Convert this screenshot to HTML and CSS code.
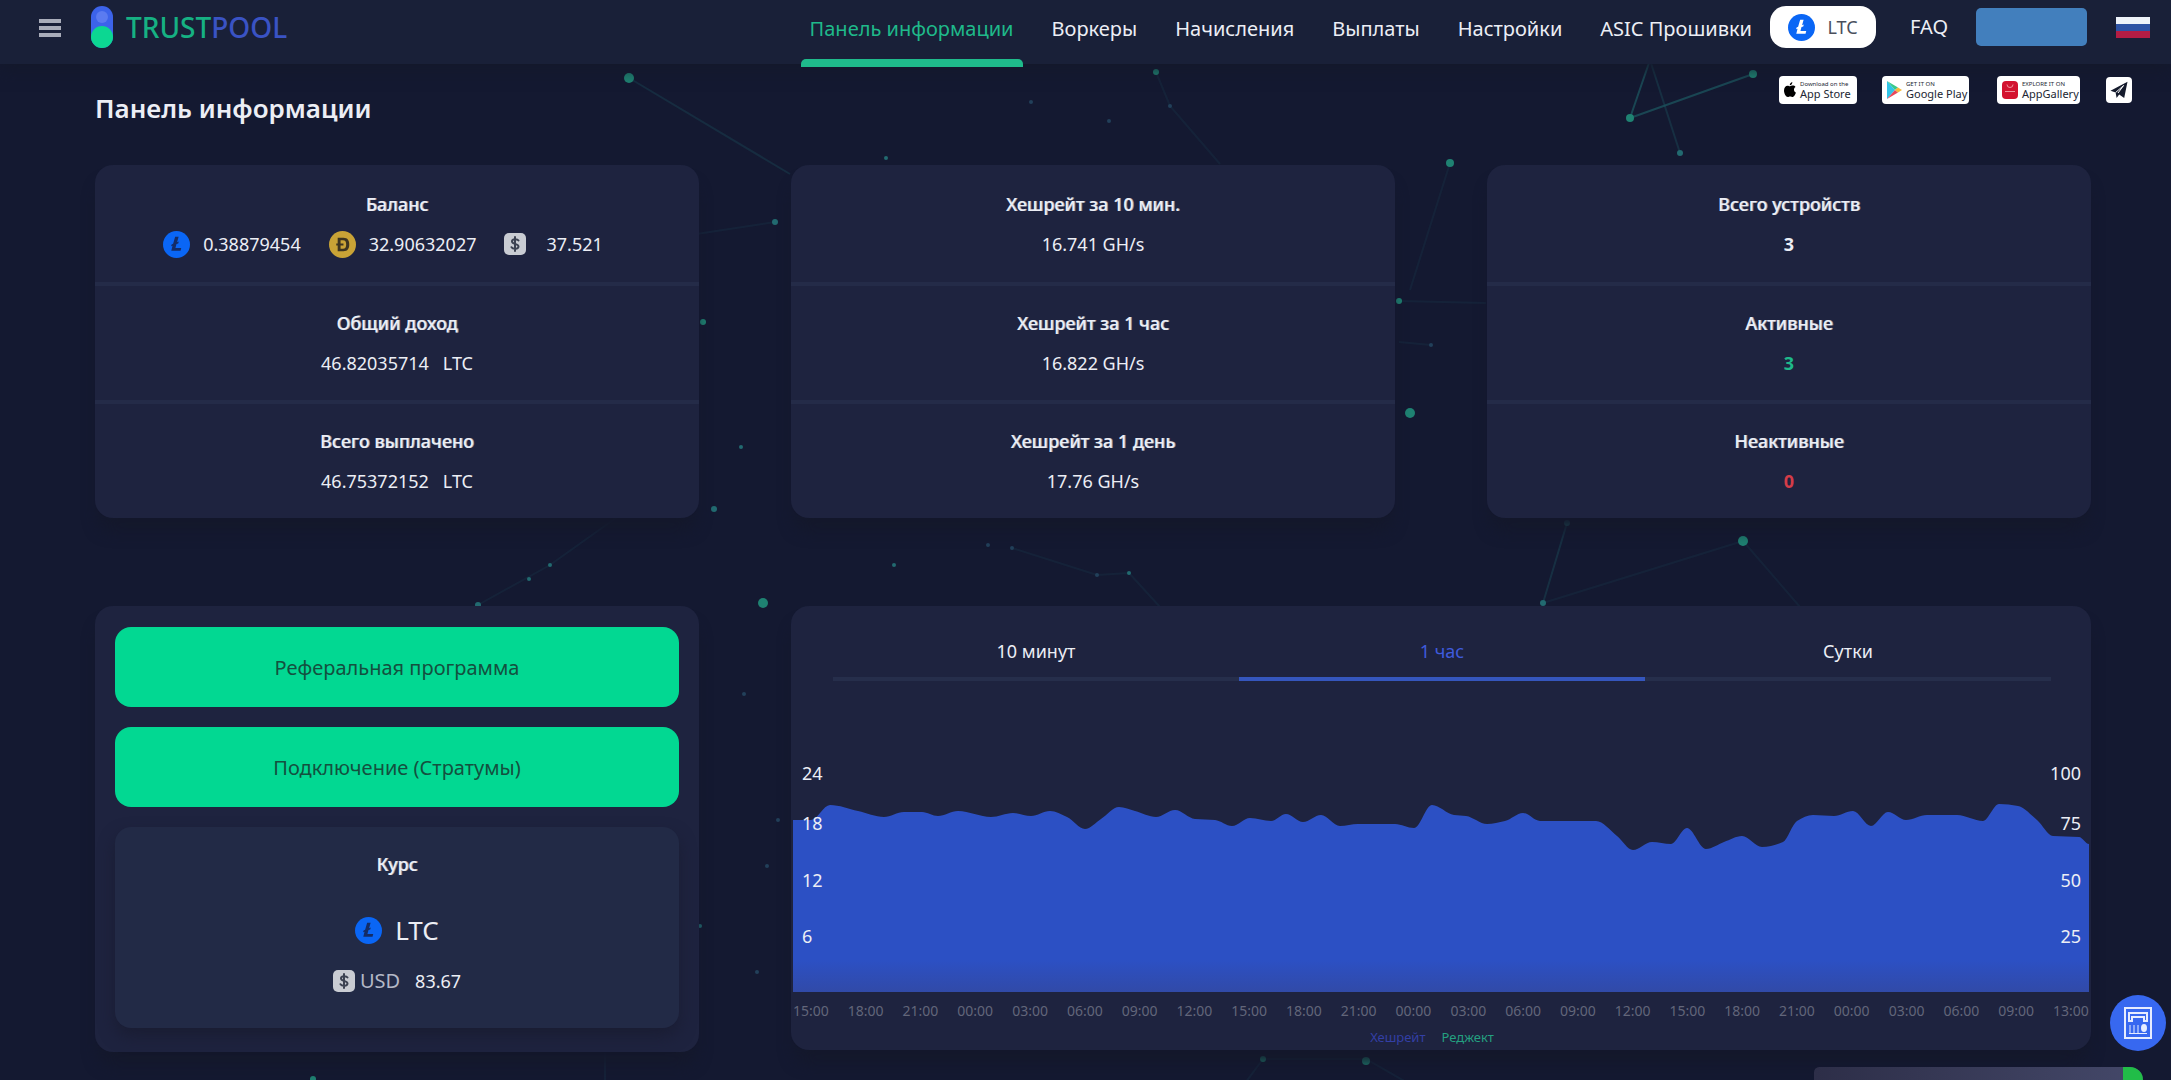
FILE: index.html
```html
<!DOCTYPE html>
<html lang="ru">
<head>
<meta charset="utf-8">
<meta name="viewport" content="width=device-width, initial-scale=1">
<title>TRUSTPOOL — Панель информации</title>
<link rel="stylesheet" href="styles.css">
</head>
<body>
<svg class="sprite" aria-hidden="true">
  <symbol id="ltc" viewBox="0 0 28 28"><circle cx="14" cy="14" r="14" fill="#0a66f5"/><path fill="currentColor" d="M12.6 6h3.6l-1.6 5.6 1.8-.7-.6 2-1.8.7-1.1 4h6l-.7 3H8.6l1.3-5.300-1.500.6.5-2 1.600-.6z"/></symbol>
  <symbol id="doge" viewBox="0 0 28 28"><circle cx="14" cy="14" r="14" fill="#c9a336"/><path fill="#3d3420" fill-rule="evenodd" d="M9 7h6c4.500 0 6 3 6 7s-1.500 7-6 7H9v-6H7.500v-2H9zm3 2.600V13h3v2h-3v3.400h2.500c2.400 0 3.300-1.600 3.300-4.400s-.9-4.400-3.300-4.400z"/></symbol>
  <symbol id="usd" viewBox="0 0 22 22"><rect width="22" height="22" rx="5" fill="#c9ccd3"/><path fill="none" stroke="#3c4252" stroke-width="2" stroke-linecap="round" d="M14.500 7.500C13.500 6 8 5.500 8 8.500c0 3 6.500 1.800 6.500 5 0 3-5.800 2.800-7 .7M11 4v14"/></symbol>
</svg>

<svg class="network" aria-hidden="true">
  <g fill="none" stroke="#1d5a63" stroke-width="2">
    <path opacity=".3" d="M629 78 790 174"/>
    <path opacity=".7" d="M1630 118 1753 74M1630 118 1650 60"/>
    <path opacity=".35" d="M1650 60 1680 153M1567 523 1543 603"/>
    <path opacity=".16" d="M1156 72 1170 106 1220 164M690 235 775 222M1450 163 1410 290M1399 301 1486 303M1399 342 1431 345M1129 573 1160 607M1012 548 1097 575 1129 573M1743 541 1543 603M1743 541 1800 607M478 605 550 565 620 515M1263 1059H1366L1420 1090M1263 1059 1240 1090M605 1053V1080"/>
  </g>
  <g fill="#1f8272">
    <circle cx="629" cy="78" r="5"/><circle cx="1156" cy="72" r="3"/><circle cx="1399" cy="301" r="3"/><circle cx="1450" cy="163" r="4"/>
    <circle cx="1630" cy="118" r="4"/><circle cx="1753" cy="74" r="4"/><circle cx="1410" cy="413" r="5"/><circle cx="763" cy="603" r="5"/>
    <circle cx="1743" cy="541" r="5"/><circle cx="1263" cy="1059" r="3"/><circle cx="1366" cy="1061" r="4"/><circle cx="703" cy="322" r="3"/>
    <circle cx="313" cy="1079" r="3"/>
  </g>
  <g fill="#226a70">
    <circle cx="886" cy="158" r="2"/><circle cx="775" cy="222" r="3"/><circle cx="1680" cy="153" r="3"/><circle cx="714" cy="509" r="3"/>
    <circle cx="478" cy="605" r="3"/><circle cx="550" cy="565" r="2"/><circle cx="529" cy="579" r="2"/><circle cx="741" cy="447" r="2"/>
    <circle cx="1567" cy="523" r="3"/><circle cx="1543" cy="603" r="3"/><circle cx="894" cy="565" r="2"/><circle cx="1129" cy="573" r="2"/><circle cx="700" cy="926" r="2"/>
  </g>
  <g fill="#22405a">
    <circle cx="1031" cy="102" r="2"/><circle cx="1170" cy="106" r="2"/><circle cx="1109" cy="121" r="2"/><circle cx="1431" cy="345" r="2"/>
    <circle cx="988" cy="545" r="2"/><circle cx="1012" cy="548" r="2"/><circle cx="1097" cy="575" r="2"/><circle cx="744" cy="694" r="2"/>
    <circle cx="778" cy="820" r="2"/><circle cx="767" cy="866" r="2"/><circle cx="757" cy="972" r="2"/>
  </g>
</svg>

<header class="header">
  <button class="menu-button" type="button" aria-label="Меню"><span></span><span></span><span></span></button>
  <a class="logo" href="#">
    <svg width="22" height="42" viewBox="0 0 22 42" aria-hidden="true"><rect width="22" height="42" rx="11" fill="#3c63ea"/><circle cx="11" cy="11" r="6" fill="#5b7bf0"/><circle cx="11" cy="31" r="11" fill="#0cd792"/></svg>
    <span class="logo-text">TRUST<span class="logo-pool">POOL</span></span>
  </a>
  <nav class="nav">
    <a class="nav-link nav-link-active" href="#">Панель информации</a>
    <a class="nav-link" href="#">Воркеры</a>
    <a class="nav-link" href="#">Начисления</a>
    <a class="nav-link" href="#">Выплаты</a>
    <a class="nav-link" href="#">Настройки</a>
    <a class="nav-link" href="#">ASIC Прошивки</a>
  </nav>
  <button class="coin-button" type="button"><svg class="coin coin-light" aria-hidden="true"><use href="#ltc"/></svg>LTC</button>
  <a class="faq" href="#">FAQ</a>
  <button class="account-button" type="button" aria-label="Аккаунт"></button>
  <button class="flag" type="button" aria-label="Русский"><span class="flag-white"></span><span class="flag-blue"></span><span class="flag-red"></span></button>
</header>

<main class="main">
  <div class="title-row">
    <h1 class="title">Панель информации</h1>
    <div class="stores">
      <a class="store store-apple" href="#">
        <svg width="12" height="16" viewBox="0 0 12 16" aria-hidden="true"><path d="M8.300 0c.2 1.500-1 3.200-2.500 3.200C5.600 1.800 6.900.3 8.300 0zM6 4.200c.8 0 1.600-.7 2.900-.7 1.100 0 2 .5 2.600 1.400-2.200 1.400-1.900 4.600.5 5.600C11.300 12.600 10 15 8.700 15c-1 0-1.400-.6-2.500-.6S4.700 15 3.800 15C2 15 0 11.600 0 8.500c0-3 1.800-4.800 3.500-4.800 1.100 0 1.800.5 2.500.5z"/></svg>
        <span class="store-text"><small>Download on the</small>App Store</span>
      </a>
      <a class="store store-google" href="#">
        <svg width="15" height="18" viewBox="0 0 15 18" aria-hidden="true"><path fill="#31c4e8" d="M0 0v18l8-9z"/><path fill="#38c98b" d="m0 0 11 6.500L8 9z"/><path fill="#e8465a" d="m0 18 11-6.500L8 9z"/><path fill="#f5b93a" d="m11 6.500 4 2.500-4 2.500L8 9z"/></svg>
        <span class="store-text"><small>GET IT ON</small>Google Play</span>
      </a>
      <a class="store store-huawei" href="#">
        <svg width="16" height="18" viewBox="0 0 16 18" aria-hidden="true"><rect width="16" height="18" rx="4" fill="#d3122f"/><path fill="none" stroke="#f0909c" d="M5 3.500a3 3 0 0 0 6 0M3 10.500h10"/></svg>
        <span class="store-text"><small>EXPLORE IT ON</small>AppGallery</span>
      </a>
      <a class="telegram" href="#" aria-label="Telegram"><svg width="18" height="18" viewBox="0 0 18 18" aria-hidden="true"><path fill="#141a2c" d="M17.500.8 14.200 17l-5-3.600L6.600 17l-1-5.500L.5 9.800z"/><path stroke="#fff" d="m5.600 11.500 8-7L8 12"  fill="none"/></svg></a>
    </div>
  </div>

  <div class="grid">
    <section class="card stats">
      <div class="stat">
        <h2 class="label">Баланс</h2>
        <div class="balances">
          <span class="balance"><svg class="coin coin-dark" aria-hidden="true"><use href="#ltc"/></svg>0.38879454</span>
          <span class="balance"><svg class="coin" aria-hidden="true"><use href="#doge"/></svg>32.90632027</span>
          <span class="balance balance-usd"><svg class="usd" aria-hidden="true"><use href="#usd"/></svg>37.521</span>
        </div>
      </div>
      <div class="stat"><h2 class="label">Общий доход</h2><p class="value amount"><span>46.82035714</span><span>LTC</span></p></div>
      <div class="stat"><h2 class="label">Всего выплачено</h2><p class="value amount"><span>46.75372152</span><span>LTC</span></p></div>
    </section>
    <section class="card stats">
      <div class="stat"><h2 class="label">Хешрейт за 10 мин.</h2><p class="value">16.741 GH/s</p></div>
      <div class="stat"><h2 class="label">Хешрейт за 1 час</h2><p class="value">16.822 GH/s</p></div>
      <div class="stat"><h2 class="label">Хешрейт за 1 день</h2><p class="value">17.76 GH/s</p></div>
    </section>
    <section class="card stats">
      <div class="stat"><h2 class="label">Всего устройств</h2><p class="value count">3</p></div>
      <div class="stat"><h2 class="label">Активные</h2><p class="value count count-on">3</p></div>
      <div class="stat"><h2 class="label">Неактивные</h2><p class="value count count-off">0</p></div>
    </section>

    <section class="card side">
      <button class="action" type="button">Реферальная программа</button>
      <button class="action" type="button">Подключение (Стратумы)</button>
      <div class="rate">
        <h2 class="label">Курс</h2>
        <div class="rate-coin"><svg class="coin coin-dark" aria-hidden="true"><use href="#ltc"/></svg>LTC</div>
        <div class="rate-price"><svg class="usd" aria-hidden="true"><use href="#usd"/></svg><span class="rate-unit">USD</span><span>83.67</span></div>
      </div>
    </section>

    <section class="card chart-card">
      <div class="tabs" role="tablist">
        <button class="tab" type="button" role="tab">10 минут</button>
        <button class="tab tab-active" type="button" role="tab" aria-selected="true">1 час</button>
        <button class="tab" type="button" role="tab">Сутки</button>
      </div>
      <div class="chart">
        <svg class="area" viewBox="0 0 1296 240" preserveAspectRatio="none" aria-hidden="true">
          <defs><linearGradient id="fill" x1="0" y1="0" x2="0" y2="1"><stop offset="0" stop-color="#2c50c4"/><stop offset=".83" stop-color="#2c50c4"/><stop offset="1" stop-color="#314aa8"/></linearGradient></defs>
          <path id="area" fill="url(#fill)"/>
        </svg>
        <div class="axis"><span>24</span><span>18</span><span>12</span><span>6</span></div>
        <div class="axis axis-right"><span>100</span><span>75</span><span>50</span><span>25</span></div>
      </div>
      <div class="times"><span>15:00</span><span>18:00</span><span>21:00</span><span>00:00</span><span>03:00</span><span>06:00</span><span>09:00</span><span>12:00</span><span>15:00</span><span>18:00</span><span>21:00</span><span>00:00</span><span>03:00</span><span>06:00</span><span>09:00</span><span>12:00</span><span>15:00</span><span>18:00</span><span>21:00</span><span>00:00</span><span>03:00</span><span>06:00</span><span>09:00</span><span>13:00</span></div>
      <div class="legend"><span class="legend-rate">Хешрейт</span><span class="legend-reject">Реджект</span></div>
    </section>
  </div>
</main>

<button class="calculator" type="button" aria-label="Калькулятор">
  <svg width="28" height="32" viewBox="0 0 28 32" fill="none" stroke="#e6ecff" stroke-width="2" aria-hidden="true"><rect x="1" y="1" width="26" height="30"/><path d="M5 14V6h18v8h-3v-4H8v4z"/><path stroke-width="1" d="M6 18v8M10 18v8M14 18v8M5 26.500h18"/><ellipse cx="20" cy="21" rx="3" ry="4" fill="#e6ecff" stroke="none"/></svg>
</button>
<div class="chat"><span class="chat-accent"></span></div>
<script src="chart.js"></script>
</body>
</html>
```
FILE: styles.css
```css
* { box-sizing: border-box; }

body {
  margin: 0;
  min-height: 100vh;
  background: #141931;
  color: #eceef5;
  font: 18px/24px "Noto Sans", "Open Sans", sans-serif;
  overflow-x: hidden;
}

h1, h2, p { margin: 0; }
a { color: inherit; text-decoration: none; }
button { border: 0; padding: 0; background: none; color: inherit; font: inherit; cursor: pointer; }
svg { display: block; flex: none; }

.sprite { position: absolute; width: 0; height: 0; }
.network { position: absolute; inset: 0; width: 100%; height: 100%; z-index: -1; }

.header {
  display: flex;
  align-items: center;
  height: 64px;
  padding: 0 21px 10px 39px;
  background: #192038;
  box-shadow: 0 4px 16px #14192a;
}
.menu-button { display: grid; gap: 3px; width: 22px; margin-top: 1px; }
.menu-button span { height: 4px; background: #a9adba; }
.logo { display: flex; align-items: center; gap: 13px; margin-left: 30px; }
.logo-text { color: #16b183; font-size: 28px; line-height: 32px; font-weight: 500; }
.logo-pool { color: #3a53c4; }

.nav { display: flex; gap: 22px; margin-left: auto; align-self: flex-start; }
.nav-link, .faq { font-size: 20px; line-height: 28px; }
.nav-link { position: relative; height: 64px; padding: 15px 8px 0; }
.nav-link-active { color: #1fb98a; }
.nav-link-active::after {
  content: "";
  position: absolute;
  inset: 59px -1px -3px;
  border-radius: 5px 5px 0 0;
  background: #1fbb8b;
}
.coin { width: 27px; height: 27px; }
.coin-light { color: #fff; }
.coin-dark { color: #142c66; }
.coin-button {
  display: flex; align-items: center; justify-content: center; gap: 12px;
  width: 106px; height: 42px; margin-left: 10px;
  border-radius: 16px; background: #fff; color: #4a4f5c;
}
.faq { margin-left: 34px; }
.account-button { width: 111px; height: 38px; margin-left: 28px; border-radius: 5px; background: #427fbd; }
.flag { display: grid; width: 34px; height: 21px; margin-left: 29px; }
.flag-white { background: #eef3fa; }
.flag-blue { background: #2d53a5; }
.flag-red { background: #b41d44; }

.main { padding: 0 80px 27px 95px; }
.title-row { display: flex; justify-content: space-between; height: 101px; }
.title { margin-top: 26px; font-size: 26px; line-height: 36px; font-weight: 600; }
.stores { display: flex; align-items: center; height: 28px; margin: 12px -41px 0 0; }
.store {
  display: flex; align-items: center; gap: 4px;
  height: 28px; padding: 0 5px; border-radius: 4px;
  background: #fff; color: #222632;
  font-size: 11px; line-height: 12px; white-space: nowrap;
}
.store-apple { width: 78px; }
.store-google { width: 87px; margin-left: 25px; }
.store-huawei { width: 83px; margin-left: 28px; }
.store-text small { display: block; font-size: 6px; line-height: 7px; }
.telegram { display: grid; place-items: center; width: 26px; height: 26px; margin-left: 26px; border-radius: 4px; background: #fff; }

.grid { display: grid; grid-template-columns: repeat(3, 1fr); column-gap: 92px; row-gap: 88px; align-items: start; }
.card { border-radius: 18px; background: #1e233f; box-shadow: 0 16px 16px -4px #14182b; }

.stats { padding-top: 3px; }
.stat {
  display: flex; flex-direction: column; align-items: center; gap: 16px;
  height: 114px; padding-top: 24px;
}
.stat + .stat { height: 118px; padding-top: 25px; border-top: 4px solid #242b48; }
.label { font-size: 18px; line-height: 24px; font-weight: 500; text-shadow: 1px 0 #eceef599; }
.balances, .balance, .amount { display: flex; align-items: center; }
.balances { gap: 28px; height: 24px; padding-right: 28px; }
.balance { gap: 13px; }
.balance-usd { gap: 20px; }
.usd { width: 22px; height: 22px; }
.amount { gap: 14px; }
.count { font-weight: 700; }
.count-on { color: #1fb98a; }
.count-off { color: #d43c48; }

.side { display: grid; gap: 20px; padding: 21px 20px 24px; }
.action { height: 80px; padding-top: 2px; border-radius: 16px; background: #02d892; color: #14503f; font-size: 20px; }
.rate {
  display: flex; flex-direction: column; align-items: center;
  height: 201px; padding-top: 25px; border-radius: 16px;
  background: #222a46; box-shadow: 0 8px 16px #1a1d33;
}
.rate-coin { display: flex; align-items: center; gap: 13px; margin-top: 36px; font-size: 26px; line-height: 36px; }
.rate-price { display: flex; align-items: center; gap: 5px; margin-top: 21px; }
.rate-unit { margin-right: 10px; color: #b4b8c6; font-size: 20px; }

.chart-card { grid-column: span 2; padding: 0 2px; }
.tabs { display: grid; grid-template-columns: repeat(3, 1fr); margin: 0 38px 0 40px; padding-top: 24px; }
.tab { height: 51px; padding-bottom: 6px; border-bottom: 4px solid #262e4b; }
.tab-active { border-color: #3556bd; color: #3f5bdc; }
.chart { position: relative; height: 240px; margin-top: 71px; }
.area { width: 100%; height: 240px; }
.axis {
  position: absolute; inset: 9px auto auto 9px;
  display: grid; grid-template-rows: 50px 57px 56px 24px;
}
.axis-right { inset: 9px 8px auto auto; text-align: right; }
.times {
  display: flex; justify-content: space-between;
  margin-top: 9px; color: #62667a; font-size: 14px; line-height: 20px;
}
.legend { display: flex; justify-content: center; gap: 16px; padding: 6px 18px 3px 0; font-size: 13px; line-height: 20px; }
.legend-rate { color: #333fa5; }
.legend-reject { color: #24a080; }

.calculator {
  position: fixed; right: 5px; bottom: 29px;
  display: grid; place-items: center;
  width: 56px; height: 56px; border-radius: 50%; background: #3768f0;
}
.chat {
  position: fixed; right: 28px; bottom: 0;
  display: flex; justify-content: flex-end;
  width: 329px; height: 13px; overflow: hidden;
  border-radius: 8px 20px 0 0; background: linear-gradient(90deg, #2d2e48, #444869);
}
.chat-accent { width: 20px; background: #21bd48; }
```
FILE: chart.js
```js
// Hashrate samples as [x, y] in the viewBox of the area chart.
const samples = [
  [0, 68], [18, 68], [37, 53], [65, 59], [91, 65], [111, 60], [129, 60], [145, 64], [165, 59], [198, 65],
  [220, 61], [238, 64], [257, 59], [274, 65], [292, 77], [308, 67], [326, 55], [342, 59], [363, 65],
  [382, 58], [402, 67], [422, 68], [439, 74], [457, 66], [478, 69], [493, 62], [510, 70], [528, 63],
  [547, 74], [565, 72], [602, 72], [621, 76], [639, 53], [661, 63], [673, 64], [694, 72], [712, 69],
  [730, 61], [747, 69], [803, 69], [824, 84], [840, 98], [859, 90], [878, 92], [894, 76], [913, 97],
  [931, 90], [949, 84], [969, 95], [990, 90], [1004, 69], [1020, 63], [1041, 64], [1060, 59], [1078, 74],
  [1095, 60], [1113, 68], [1134, 63], [1164, 63], [1190, 69], [1206, 52], [1225, 54], [1244, 68],
  [1260, 84], [1286, 85], [1296, 92]
];

const slope = (a, b) => (b[1] - a[1]) / (b[0] - a[0]);

// Tangent is flat at peaks and valleys, so the curve never overshoots.
const tangent = (i) => {
  if (i === 0 || i === samples.length - 1) return 0;
  const before = slope(samples[i - 1], samples[i]);
  const after = slope(samples[i], samples[i + 1]);
  return before * after <= 0 ? 0 : (2 * before * after) / (before + after);
};

let path = `M${samples[0]}`;
for (let i = 1; i < samples.length; i++) {
  const [x0, y0] = samples[i - 1];
  const [x1, y1] = samples[i];
  const third = (x1 - x0) / 3;
  path += `C${x0 + third},${y0 + tangent(i - 1) * third} ${x1 - third},${y1 - tangent(i) * third} ${x1},${y1}`;
}
document.getElementById("area").setAttribute("d", `${path}V240H0Z`);
```
